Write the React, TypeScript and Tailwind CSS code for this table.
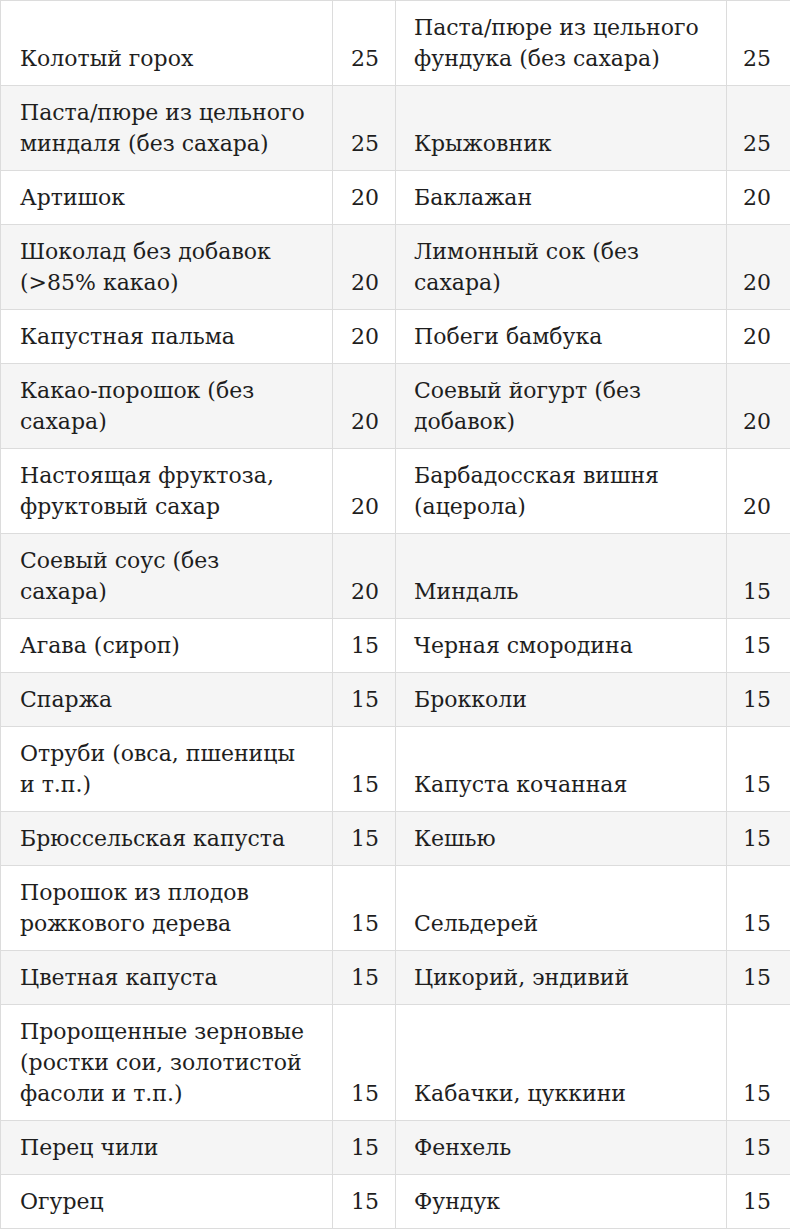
const rows: [string, string, string, string][] = [
  ["Колотый горох", "25", "Паста/пюре из цельного фундука (без сахара)", "25"],
  ["Паста/пюре из цельного миндаля (без сахара)", "25", "Крыжовник", "25"],
  ["Артишок", "20", "Баклажан", "20"],
  ["Шоколад без добавок (>85% какао)", "20", "Лимонный сок (без сахара)", "20"],
  ["Капустная пальма", "20", "Побеги бамбука", "20"],
  ["Какао-порошок (без сахара)", "20", "Соевый йогурт (без добавок)", "20"],
  ["Настоящая фруктоза, фруктовый сахар", "20", "Барбадосская вишня (ацерола)", "20"],
  ["Соевый соус (без сахара)", "20", "Миндаль", "15"],
  ["Агава (сироп)", "15", "Черная смородина", "15"],
  ["Спаржа", "15", "Брокколи", "15"],
  ["Отруби (овса, пшеницы и т.п.)", "15", "Капуста кочанная", "15"],
  ["Брюссельская капуста", "15", "Кешью", "15"],
  ["Порошок из плодов рожкового дерева", "15", "Сельдерей", "15"],
  ["Цветная капуста", "15", "Цикорий, эндивий", "15"],
  ["Пророщенные зерновые (ростки сои, золотистой фасоли и т.п.)", "15", "Кабачки, цуккини", "15"],
  ["Перец чили", "15", "Фенхель", "15"],
  ["Огурец", "15", "Фундук", "15"],
];

const cell = "border border-[#dcdcdc] align-bottom pt-[11px] pb-[11px]";

export default function App() {
  return (
    <div className="w-[790px] bg-white">
      <table className="w-[790px] table-fixed border-collapse font-['DejaVu_Serif',serif] text-[22px] leading-[31px] text-[#1e1e1e]">
        <colgroup>
          <col className="w-[332px]" />
          <col className="w-[63px]" />
          <col className="w-[331px]" />
          <col className="w-[64px]" />
        </colgroup>
        <tbody>
          {rows.map((r, i) => (
            <tr key={i} className={i % 2 === 0 ? "bg-white" : "bg-[#f5f5f5]"}>
              <td className={`${cell} pl-[19px] pr-[24px]`}>{r[0]}</td>
              <td className={`${cell} pl-[18px]`}>{r[1]}</td>
              <td className={`${cell} pl-[18px] pr-[24px]`}>{r[2]}</td>
              <td className={`${cell} pl-[16px]`}>{r[3]}</td>
            </tr>
          ))}
        </tbody>
      </table>
    </div>
  );
}
